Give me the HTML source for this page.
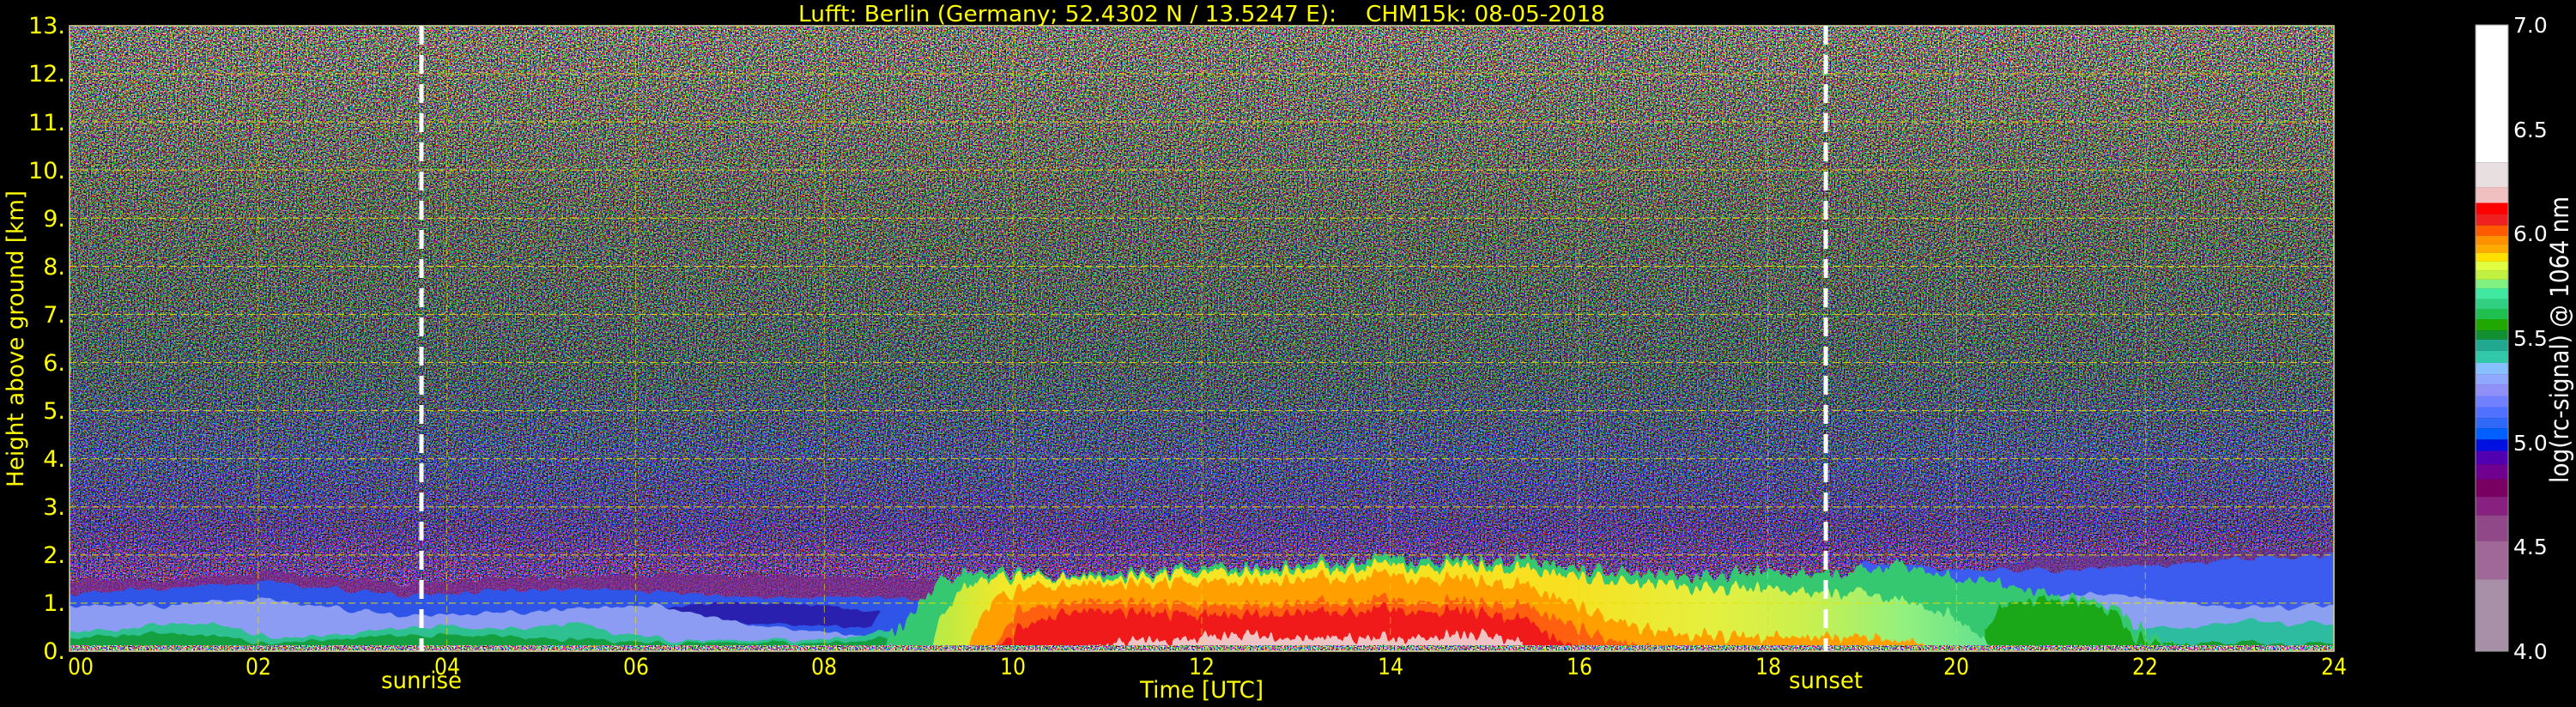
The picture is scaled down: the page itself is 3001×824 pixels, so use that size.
<!DOCTYPE html>
<html><head><meta charset="utf-8"><style>
html,body{margin:0;padding:0;background:#000;}
svg{display:block;}
text{font-family:"DejaVu Sans","Liberation Sans",sans-serif;}
</style></head><body>
<svg width="3001" height="824" viewBox="0 0 3001 824" xmlns="http://www.w3.org/2000/svg">
<defs>
<filter id="nz" filterUnits="userSpaceOnUse" x="81" y="30" width="2638" height="729" color-interpolation-filters="sRGB">
<feTurbulence type="fractalNoise" baseFrequency="0.62" numOctaves="1" seed="3" result="t"/>
<feComponentTransfer in="t" result="n">
<feFuncR type="linear" slope="5" intercept="-2"/>
<feFuncG type="linear" slope="5" intercept="-2"/>
<feFuncB type="linear" slope="5" intercept="-2"/>
<feFuncA type="linear" slope="0" intercept="1"/>
</feComponentTransfer>
<feComposite in="SourceGraphic" in2="n" operator="arithmetic" k1="2" k2="0" k3="0" k4="0"/>
</filter>
<filter id="streak" filterUnits="userSpaceOnUse" x="81" y="30" width="2638" height="729" color-interpolation-filters="sRGB">
<feTurbulence type="fractalNoise" baseFrequency="0.12 0.004" numOctaves="2" seed="7" result="t"/>
<feColorMatrix in="t" type="matrix" values="0 0 0 0 0.5  0 1 0 0 0  0 0 1 0 0  0 0 0 0 1" result="d"/>
<feDisplacementMap in="SourceGraphic" in2="d" scale="32" xChannelSelector="R" yChannelSelector="G"/>
</filter>
<filter id="soft" filterUnits="userSpaceOnUse" x="81" y="30" width="2638" height="729" color-interpolation-filters="sRGB">
<feTurbulence type="fractalNoise" baseFrequency="0.05 0.01" numOctaves="2" seed="11" result="t"/>
<feColorMatrix in="t" type="matrix" values="0 0 0 0 0.5  0 1 0 0 0  0 0 1 0 0  0 0 0 0 1" result="d"/>
<feDisplacementMap in="SourceGraphic" in2="d" scale="14" xChannelSelector="R" yChannelSelector="G"/>
</filter>
<linearGradient id="bg" x1="0" y1="30" x2="0" y2="759" gradientUnits="userSpaceOnUse">
<stop offset="0" stop-color="#7a786c"/>
<stop offset="0.3" stop-color="#5e6658"/>
<stop offset="0.55" stop-color="#4c5e5e"/>
<stop offset="0.7" stop-color="#4a5284"/>
<stop offset="0.8" stop-color="#54428a"/>
<stop offset="0.9" stop-color="#74449a"/>
<stop offset="1" stop-color="#6a58a8"/>
</linearGradient>
<linearGradient id="yel" x1="9" y1="0" x2="20.4" y2="0" gradientUnits="userSpaceOnUse">
<stop offset="0" stop-color="#a8ec50"/>
<stop offset="0.08" stop-color="#f4e828"/>
<stop offset="0.6" stop-color="#f8e020"/>
<stop offset="0.74" stop-color="#e4f040"/>
<stop offset="0.83" stop-color="#c8f050"/>
<stop offset="0.92" stop-color="#90f080"/>
<stop offset="1" stop-color="#60e090"/>
</linearGradient>
</defs>

<rect x="81" y="30" width="2638" height="729" fill="url(#bg)" filter="url(#nz)"/>

<g filter="url(#soft)">
<g transform="translate(81,759) scale(109.917,-56.077)">
<polygon fill="#7a2888" opacity="0.7" points="0,0 0,1.5 1,1.45 2,1.65 3,1.5 3.7,1.4 4.5,1.5 5.5,1.55 6.5,1.6 7.5,1.55 8.5,1.55 9.3,1.5 9.3,0"/>
<polygon fill="#2f55e8" points="0,0 0,1.2 1,1.3 2,1.45 3,1.25 3.7,1.15 4.5,1.25 5.5,1.3 6.5,1.2 7.5,1.1 8.5,1.15 9.2,1.0 9.2,0"/>
<polygon fill="#2a20b0" points="6.3,0.9 7,1.02 8,0.95 8.6,0.8 8.5,0.5 7.5,0.55 6.8,0.65"/>
<polygon fill="#8c9cf2" points="0,0 0,0.95 1,0.95 2,1.1 2.8,0.9 3.5,0.75 4.5,0.8 5.5,0.9 6.2,0.95 6.8,0.7 7.4,0.5 8,0.4 8.6,0.3 9,0.1 9,0"/>
<polygon fill="#2ec090" points="0,0 0,0.4 0.5,0.45 1,0.6 1.5,0.55 1.8,0.45 2.2,0.3 3,0.35 3.5,0.5 4,0.55 4.5,0.45 5,0.55 5.4,0.6 5.8,0.35 6.5,0.2 8,0.25 8.7,0.4 8.7,0"/>
<polygon fill="#14a040" points="0,0 0,0.25 0.5,0.35 1,0.4 1.5,0.3 2,0.2 3,0.25 3.5,0.35 4,0.35 5,0.3 5.5,0.25 6,0.15 8,0.18 8.7,0.25 8.7,0"/>
<polygon fill="#6a3090" opacity="0.6" points="20,1.6 21,1.95 22,1.95 24,2.15 24,1.6"/>
<polygon fill="#3c5cf0" points="19,0 19,1.85 20,1.7 21,1.65 22,1.75 23,1.9 24,2.0 24,0"/>
<polygon fill="#8ca0f2" points="20,0 20,1.0 21.5,1.2 22,1.1 23,0.9 24,0.95 24,0"/>
<polygon fill="#2ebca0" points="21,0 21.8,0.5 22.5,0.5 23,0.65 23.5,0.6 24,0.55 24,0"/>
<polygon fill="#1a9c30" points="21.5,0 22,0.15 23,0.2 24,0.15 24,0"/>
</g>
</g>
<g filter="url(#streak)">
<g transform="translate(81,759) scale(109.917,-56.077)">
<polygon fill="#35c870" points="8.6,0 8.7,0.3 9,0.9 9.2,1.4 9.5,1.6 10,1.65 10.5,1.55 11,1.6 11.5,1.65 12,1.75 13,1.8 14,1.9 15,1.85 15.5,1.85 16,1.7 16.5,1.6 17,1.55 17.5,1.6 18,1.65 18.6,1.6 19,1.7 19.3,1.8 19.7,1.65 20,1.5 20.5,1.4 21,1.2 21.5,1.05 21.7,0.9 21.9,0.5 22.2,0.2 22.5,0.1 22.5,0"/>
<polygon fill="#1aa818" points="20.3,0 20.3,0.4 20.5,1.0 21,1.1 21.5,0.95 21.7,0.8 21.8,0.4 22,0.2 22.5,0.12 22.5,0"/>
<polygon fill="url(#yel)" points="9.1,0 9.2,0.5 9.4,1.2 9.7,1.5 10,1.55 11,1.5 12,1.65 13,1.7 14,1.75 15,1.75 16,1.55 16.5,1.4 17,1.35 18,1.3 18.6,1.2 19,1.25 19.5,1.0 20,0.7 20.3,0.2 20.4,0"/>
<polygon fill="#ffa000" points="9.5,0 9.6,0.5 9.8,1.1 10.2,1.35 11,1.4 12,1.45 13,1.5 14,1.55 15,1.45 15.5,1.3 16,0.9 16.5,0.55 17,0.35 18,0.3 19,0.3 19.5,0.2 19.8,0.05 19.8,0"/>
<polygon fill="#ff6010" points="9.8,0 10,0.8 10.5,1.0 11,1.05 12,0.95 13,1.0 14,1.05 15,1.0 15.5,0.9 16,0.45 16.5,0.15 16.8,0"/>
<polygon fill="#f01a1a" points="9.8,0 10,0.4 10.5,0.8 11,0.85 12,0.75 13,0.8 14,0.85 15,0.8 15.5,0.6 15.8,0.2 16,0"/>
<polygon fill="#f0c4c4" points="10.8,0 10.8,0.1 11,0.15 11.4,0.25 11.7,0.2 12,0.3 12.5,0.35 13,0.25 13.5,0.3 14,0.25 14.5,0.3 15,0.35 15.4,0.2 15.4,0"/>
</g>
</g>
<rect x="81" y="752" width="2638" height="7" fill="#a09a90" filter="url(#nz)"/>

<g stroke="#e8e000" stroke-width="1.1" stroke-dasharray="8,5" fill="none" opacity="0.85">
<line x1="81" x2="2719" y1="702.9" y2="702.9"/><line x1="81" x2="2719" y1="646.8" y2="646.8"/>
<line x1="81" x2="2719" y1="590.8" y2="590.8"/><line x1="81" x2="2719" y1="534.7" y2="534.7"/>
<line x1="81" x2="2719" y1="478.6" y2="478.6"/><line x1="81" x2="2719" y1="422.5" y2="422.5"/>
<line x1="81" x2="2719" y1="366.4" y2="366.4"/><line x1="81" x2="2719" y1="310.4" y2="310.4"/>
<line x1="81" x2="2719" y1="254.3" y2="254.3"/><line x1="81" x2="2719" y1="198.2" y2="198.2"/>
<line x1="81" x2="2719" y1="142.1" y2="142.1"/><line x1="81" x2="2719" y1="86" y2="86"/>
</g>
<g stroke="#e8e000" stroke-width="0.8" stroke-dasharray="8,5" fill="none" opacity="0.8">
<line y1="30" y2="759" x1="300.8" x2="300.8"/><line y1="30" y2="759" x1="520.7" x2="520.7"/>
<line y1="30" y2="759" x1="740.5" x2="740.5"/><line y1="30" y2="759" x1="960.3" x2="960.3"/>
<line y1="30" y2="759" x1="1180.2" x2="1180.2"/><line y1="30" y2="759" x1="1400" x2="1400"/>
<line y1="30" y2="759" x1="1619.8" x2="1619.8"/><line y1="30" y2="759" x1="1839.7" x2="1839.7"/>
<line y1="30" y2="759" x1="2059.5" x2="2059.5"/><line y1="30" y2="759" x1="2279.3" x2="2279.3"/>
<line y1="30" y2="759" x1="2499.2" x2="2499.2"/>
</g>
<rect x="81" y="30" width="2638" height="729" fill="none" stroke="#d8d8a0" stroke-width="1.5"/>
<g stroke="#ffffff" stroke-width="5" stroke-dasharray="22,12">
<line x1="491" x2="491" y1="30" y2="759"/>
<line x1="2127" x2="2127" y1="30" y2="759"/>
</g>

<text x="930" y="25" font-size="26" fill="#ffff00" textLength="627" lengthAdjust="spacingAndGlyphs">Lufft: Berlin (Germany; 52.4302 N / 13.5247 E):</text>
<text x="1591" y="25" font-size="26" fill="#ffff00" textLength="279" lengthAdjust="spacingAndGlyphs">CHM15k: 08-05-2018</text>

<g font-size="27" fill="#ffff00" text-anchor="end">
<text x="76" y="768">0.</text><text x="76" y="712">1.</text><text x="76" y="656">2.</text>
<text x="76" y="600">3.</text><text x="76" y="544">4.</text><text x="76" y="488">5.</text>
<text x="76" y="432">6.</text><text x="76" y="376">7.</text><text x="76" y="320">8.</text>
<text x="76" y="264">9.</text><text x="76" y="208">10.</text><text x="76" y="152">11.</text>
<text x="76" y="95">12.</text><text x="76" y="39">13.</text>
</g>
<text transform="translate(27,395) rotate(-90)" font-size="27" fill="#ffff00" text-anchor="middle" textLength="346" lengthAdjust="spacingAndGlyphs">Height above ground [km]</text>

<g font-size="27" fill="#ffff00" text-anchor="middle">
<text x="94" y="786" textLength="30" lengthAdjust="spacingAndGlyphs">00</text>
<text x="301" y="786" textLength="30" lengthAdjust="spacingAndGlyphs">02</text>
<text x="521" y="786" textLength="30" lengthAdjust="spacingAndGlyphs">04</text>
<text x="741" y="786" textLength="30" lengthAdjust="spacingAndGlyphs">06</text>
<text x="960" y="786" textLength="30" lengthAdjust="spacingAndGlyphs">08</text>
<text x="1180" y="786" textLength="30" lengthAdjust="spacingAndGlyphs">10</text>
<text x="1400" y="786" textLength="30" lengthAdjust="spacingAndGlyphs">12</text>
<text x="1620" y="786" textLength="30" lengthAdjust="spacingAndGlyphs">14</text>
<text x="1840" y="786" textLength="30" lengthAdjust="spacingAndGlyphs">16</text>
<text x="2060" y="786" textLength="30" lengthAdjust="spacingAndGlyphs">18</text>
<text x="2279" y="786" textLength="30" lengthAdjust="spacingAndGlyphs">20</text>
<text x="2499" y="786" textLength="30" lengthAdjust="spacingAndGlyphs">22</text>
<text x="2719" y="786" textLength="30" lengthAdjust="spacingAndGlyphs">24</text>
<text x="491" y="802" textLength="94" lengthAdjust="spacingAndGlyphs">sunrise</text>
<text x="2127" y="802" textLength="86" lengthAdjust="spacingAndGlyphs">sunset</text>
<text x="1400" y="813" textLength="144" lengthAdjust="spacingAndGlyphs">Time [UTC]</text>
</g>

<g>
<rect x="2884" y="29" width="38" height="160.2" fill="#ffffff"/>
<rect x="2884" y="189.2" width="38" height="29" fill="#e8e0e0"/>
<rect x="2884" y="218.1" width="38" height="18.5" fill="#f0c0c0"/>
<rect x="2884" y="236.5" width="38" height="13.2" fill="#ff0000"/>
<rect x="2884" y="249.6" width="38" height="13.2" fill="#f02020"/>
<rect x="2884" y="262.7" width="38" height="12.2" fill="#ff5a00"/>
<rect x="2884" y="274.8" width="38" height="10.1" fill="#ff9000"/>
<rect x="2884" y="284.8" width="38" height="10.1" fill="#ffaa00"/>
<rect x="2884" y="294.8" width="38" height="10.1" fill="#ffe000"/>
<rect x="2884" y="304.8" width="38" height="10.6" fill="#e0ff40"/>
<rect x="2884" y="315.3" width="38" height="10.6" fill="#c0f040"/>
<rect x="2884" y="325.8" width="38" height="10.6" fill="#80f080"/>
<rect x="2884" y="336.3" width="38" height="12.2" fill="#40e8a0"/>
<rect x="2884" y="348.4" width="38" height="11.7" fill="#30d080"/>
<rect x="2884" y="360" width="38" height="12.1" fill="#20c050"/>
<rect x="2884" y="372" width="38" height="13.3" fill="#20a800"/>
<rect x="2884" y="385.2" width="38" height="10.6" fill="#109030"/>
<rect x="2884" y="395.7" width="38" height="13.2" fill="#20a890"/>
<rect x="2884" y="408.8" width="38" height="14.3" fill="#30c8a8"/>
<rect x="2884" y="423" width="38" height="13.3" fill="#88c0ff"/>
<rect x="2884" y="436.2" width="38" height="12.1" fill="#90a8ff"/>
<rect x="2884" y="448.2" width="38" height="13.3" fill="#9090f8"/>
<rect x="2884" y="461.4" width="38" height="13.2" fill="#7080ff"/>
<rect x="2884" y="474.5" width="38" height="12.7" fill="#5070ff"/>
<rect x="2884" y="487.1" width="38" height="12.2" fill="#3068f8"/>
<rect x="2884" y="499.2" width="38" height="13.2" fill="#0060ff"/>
<rect x="2884" y="512.3" width="38" height="13.3" fill="#0010e0"/>
<rect x="2884" y="525.5" width="38" height="15.8" fill="#5000b0"/>
<rect x="2884" y="541.2" width="38" height="17.5" fill="#700090"/>
<rect x="2884" y="558.6" width="38" height="20.6" fill="#780060"/>
<rect x="2884" y="579.1" width="38" height="21.6" fill="#882080"/>
<rect x="2884" y="600.6" width="38" height="30.1" fill="#904888"/>
<rect x="2884" y="630.6" width="38" height="44.8" fill="#a06898"/>
<rect x="2884" y="675.3" width="38" height="83.7" fill="#a890a8"/>
<rect x="2884" y="29" width="38" height="730" fill="none" stroke="#999" stroke-width="1"/>
</g>
<g font-size="25" fill="#ffffff">
<text x="2928" y="38">7.0</text><text x="2928" y="160">6.5</text>
<text x="2928" y="281">6.0</text><text x="2928" y="403">5.5</text>
<text x="2928" y="525">5.0</text><text x="2928" y="646">4.5</text>
<text x="2928" y="768">4.0</text>
</g>
<text transform="translate(2992,396) rotate(-90)" font-size="29" fill="#ffffff" text-anchor="middle" textLength="334" lengthAdjust="spacingAndGlyphs">log(rc-signal) @ 1064 nm</text>
</svg>
</body></html>
